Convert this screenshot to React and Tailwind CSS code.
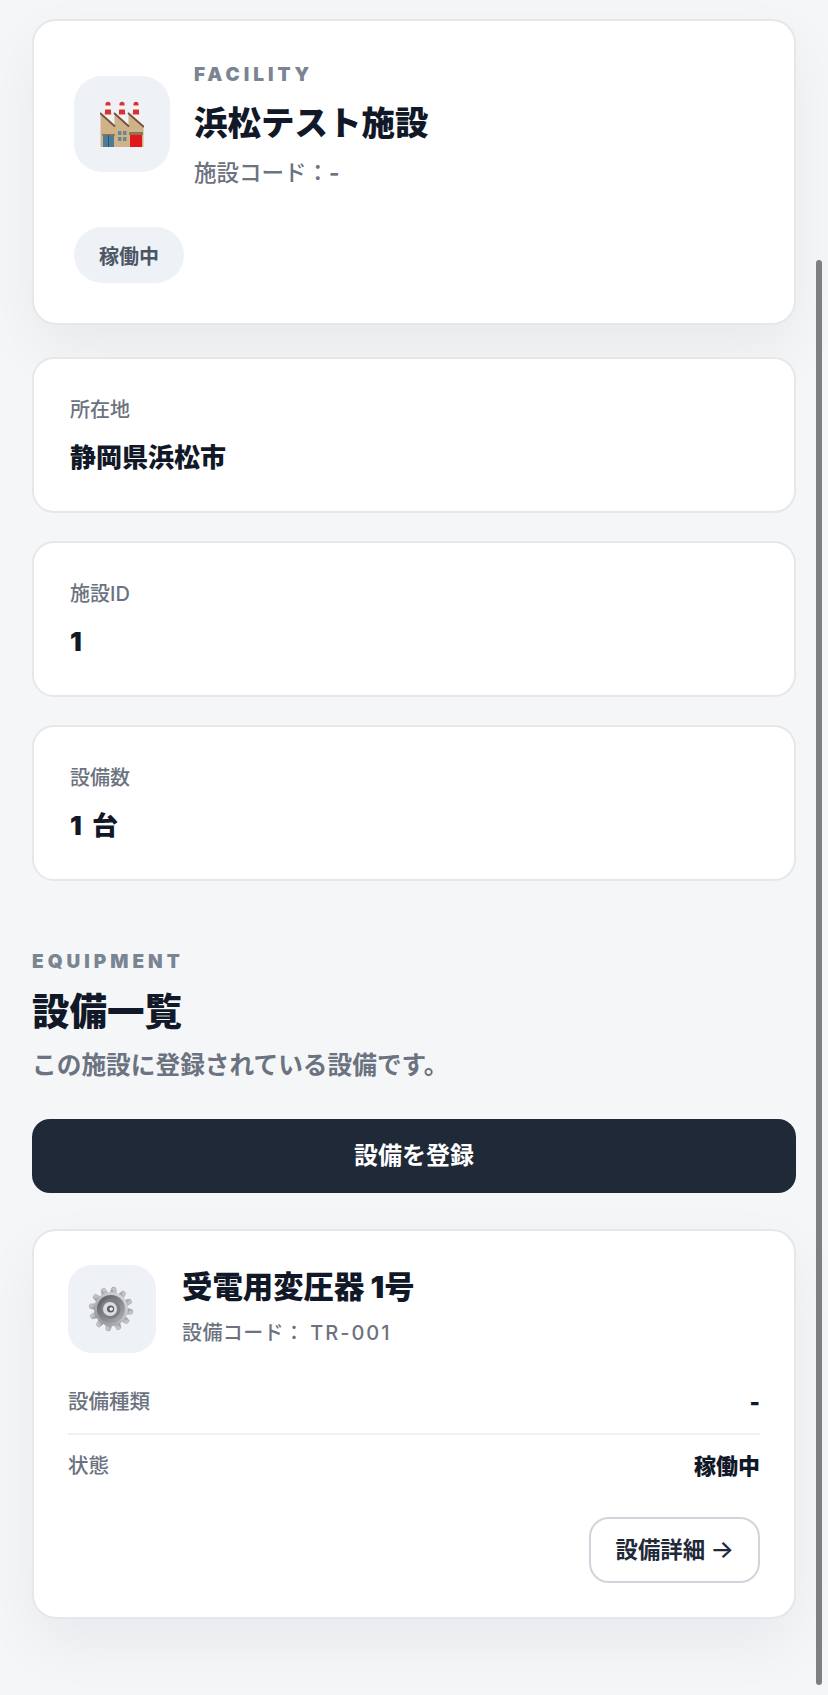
const FONT = "font-['Inter','Noto_Sans_CJK_JP',sans-serif]";

function Factory() {
  return (
    <svg width="44" height="46" viewBox="0 0 44 46" aria-hidden="true">
      {[8, 22, 36].map((x) => (
        <g key={x}>
          <path d={`M${x - 3.4} 22 L${x - 2.4} 2 Q${x} -0.6 ${x + 2.4} 2 L${x + 3.4} 22 Z`} fill="#f7f3ef" />
          <path d={`M${x - 2.4} 2 Q${x} -0.6 ${x + 2.4} 2 L${x + 2.6} 4.5 H${x - 2.6} Z`} fill="#d8332f" />
          <path d={`M${x - 2.9} 8.5 H${x + 2.9} L${x + 3.2} 13.5 H${x - 3.2} Z`} fill="#d8332f" />
        </g>
      ))}
      <path d="M0.5 46 V12 L14.5 25 V12 L28.5 25 V12 L43.5 26 V46 Z" fill="#cfb287" />
      <path d="M0 12 L15 25.5 M14 12 L29 25.5 M28 12 L44 26" stroke="#73513c" strokeWidth="1.8" fill="none" />
      <rect x="3" y="34" width="11" height="12" fill="#4b7c9c" />
      <rect x="2" y="33" width="13" height="1.6" fill="#8c7451" />
      <rect x="8" y="34" width="1" height="12" fill="#2d536d" />
      <rect x="18" y="30" width="3.4" height="4" fill="#6b8693" />
      <rect x="23" y="30" width="3.4" height="4" fill="#6b8693" />
      <rect x="18" y="36" width="3.4" height="4" fill="#6b8693" />
      <rect x="23" y="36" width="3.4" height="4" fill="#6b8693" />
      <rect x="29" y="31" width="14" height="3" fill="#8e7553" />
      <rect x="30" y="34" width="12" height="12" fill="#e0181c" />
    </svg>
  );
}

function Gear() {
  const teeth = Array.from({ length: 12 }, (_, i) => i * 30 + 8);
  return (
    <svg width="46" height="46" viewBox="0 0 46 46" aria-hidden="true">
      <defs>
        <linearGradient id="gearBody" x1="0" y1="1" x2="1" y2="0">
          <stop offset="0" stopColor="#8a8c91" />
          <stop offset="0.55" stopColor="#bec0c4" />
          <stop offset="1" stopColor="#dcdde0" />
        </linearGradient>
        <linearGradient id="gearRing" x1="0" y1="0" x2="1" y2="1">
          <stop offset="0" stopColor="#56585d" />
          <stop offset="1" stopColor="#b0b2b6" />
        </linearGradient>
      </defs>
      {teeth.map((a) => (
        <path key={a} d="M20 7 L21 1.6 Q23 0.6 25 1.6 L26 7 Z" fill="url(#gearBody)" stroke="#8d8f94" strokeWidth="0.5" transform={`rotate(${a} 23 23)`} />
      ))}
      <circle cx="23" cy="23" r="17" fill="url(#gearBody)" />
      <circle cx="23" cy="23" r="14" fill="url(#gearRing)" />
      <circle cx="22.6" cy="23" r="10" fill="#7e8085" />
      <circle cx="22" cy="23" r="7" fill="#dcdde0" />
      <circle cx="22.6" cy="23" r="3.6" fill="#5c5e63" />
      <circle cx="23.2" cy="23" r="1.8" fill="#eef0f3" />
    </svg>
  );
}

function InfoCard({ label, value }) {
  return (
    <div className="h-[156px] rounded-[22px] border-2 border-[#e5e7eb] bg-white px-[36px] pt-[36px]">
      <div className="text-[20px] leading-[30px] font-medium text-[#6b7280]">{label}</div>
      <div className="mt-[18px] text-[26px] leading-[30px] font-black text-[#111827] [word-spacing:5px]">{value}</div>
    </div>
  );
}

export default function App() {
  return (
    <div className={`${FONT} relative h-[1695px] overflow-hidden bg-[#f5f6f8] pl-[32px] pr-[32px] pt-[19px]`}>
      <div className="rounded-[24px] border-2 border-[#e5e7eb] bg-white px-[40px] pt-[40px] pb-[40px] shadow-[0_24px_60px_rgba(17,24,39,0.055)]">
        <div className="flex items-start gap-[24px]">
          <div className="mt-[15px] flex h-[96px] w-[96px] shrink-0 items-center justify-center rounded-[28px] bg-[#eef2f7]">
            <Factory />
          </div>
          <div className="flex flex-col pt-[2px]">
            <div className="text-[19px] leading-[24px] font-black tracking-[4px] text-[#7a8492]">FACILITY</div>
            <div className="mt-[14px] text-[33.5px] leading-[44px] font-black text-[#111827]">浜松テスト施設</div>
            <div className="mt-[13px] text-[22.5px] leading-[30px] font-medium text-[#6b7280]">
              施設コード：<span className="font-bold">-</span>
            </div>
          </div>
        </div>
        <div className="mt-[39px] flex h-[56px] w-[110px] items-center justify-center rounded-[28px] bg-[#eef2f7] pt-[3px] text-[20px] font-bold text-[#4b5563]">
          稼働中
        </div>
      </div>

      <div className="mt-[32px] flex flex-col gap-[28px]">
        <InfoCard label="所在地" value="静岡県浜松市" />
        <InfoCard label="施設ID" value="1" />
        <InfoCard label="設備数" value="1 台" />
      </div>

      <div className="mt-[69px] text-[19px] leading-[24px] font-black tracking-[4px] text-[#7a8492]">EQUIPMENT</div>
      <div className="mt-[13px] text-[37.5px] leading-[50px] font-black text-[#111827]">設備一覧</div>
      <div className="mt-[10px] text-[24.7px] leading-[36px] font-semibold text-[#6b7280]">この施設に登録されている設備です。</div>

      <div className="mt-[36px] flex h-[74px] items-center justify-center rounded-[18px] bg-[#1f2937] text-[24px] font-bold text-white">
        設備を登録
      </div>

      <div className="mt-[36px] rounded-[24px] border-2 border-[#e5e7eb] bg-white px-[34px] pt-[33px] pb-[34px] shadow-[0_24px_60px_rgba(17,24,39,0.055)]">
        <div className="flex items-start gap-[26px]">
          <div className="mt-[1px] flex h-[88px] w-[88px] shrink-0 items-center justify-center rounded-[24px] bg-[#eef2f7] pr-[2px]">
            <Gear />
          </div>
          <div className="flex flex-col pt-[3px]">
            <div className="text-[30.4px] leading-[40px] font-black text-[#111827]">受電用変圧器 1号</div>
            <div className="mt-[11px] text-[20px] leading-[30px] font-medium tracking-[0.02em] text-[#6b7280]">
              設備コード： <span className="tracking-[0.1em]">TR-001</span>
            </div>
          </div>
        </div>
        <div className="mt-[34px] flex items-start justify-between border-b-2 border-[#eef0f3] pb-[16px]">
          <span className="text-[20.5px] leading-[30px] font-medium text-[#6b7280]">設備種類</span>
          <span className="text-[22px] leading-[30px] font-black text-[#111827]">-</span>
        </div>
        <div className="mt-[16px] flex items-start justify-between">
          <span className="text-[20.5px] leading-[30px] font-medium text-[#6b7280]">状態</span>
          <span className="text-[22px] leading-[30px] font-black text-[#111827]">稼働中</span>
        </div>
        <div className="mt-[36px] flex justify-end">
          <div className="flex h-[66px] items-center gap-[5px] rounded-[20px] border-2 border-[#d1d5db] pl-[25px] pr-[24px] text-[22.4px] font-bold text-[#1f2937]">
            <span>設備詳細</span>
            <span className="text-[25px] font-medium font-['Inter',sans-serif]">→</span>
          </div>
        </div>
      </div>

      <div className="absolute right-[6px] top-[260px] h-[1425px] w-[6px] rounded-full bg-[#7f7f7f]" />
    </div>
  );
}
